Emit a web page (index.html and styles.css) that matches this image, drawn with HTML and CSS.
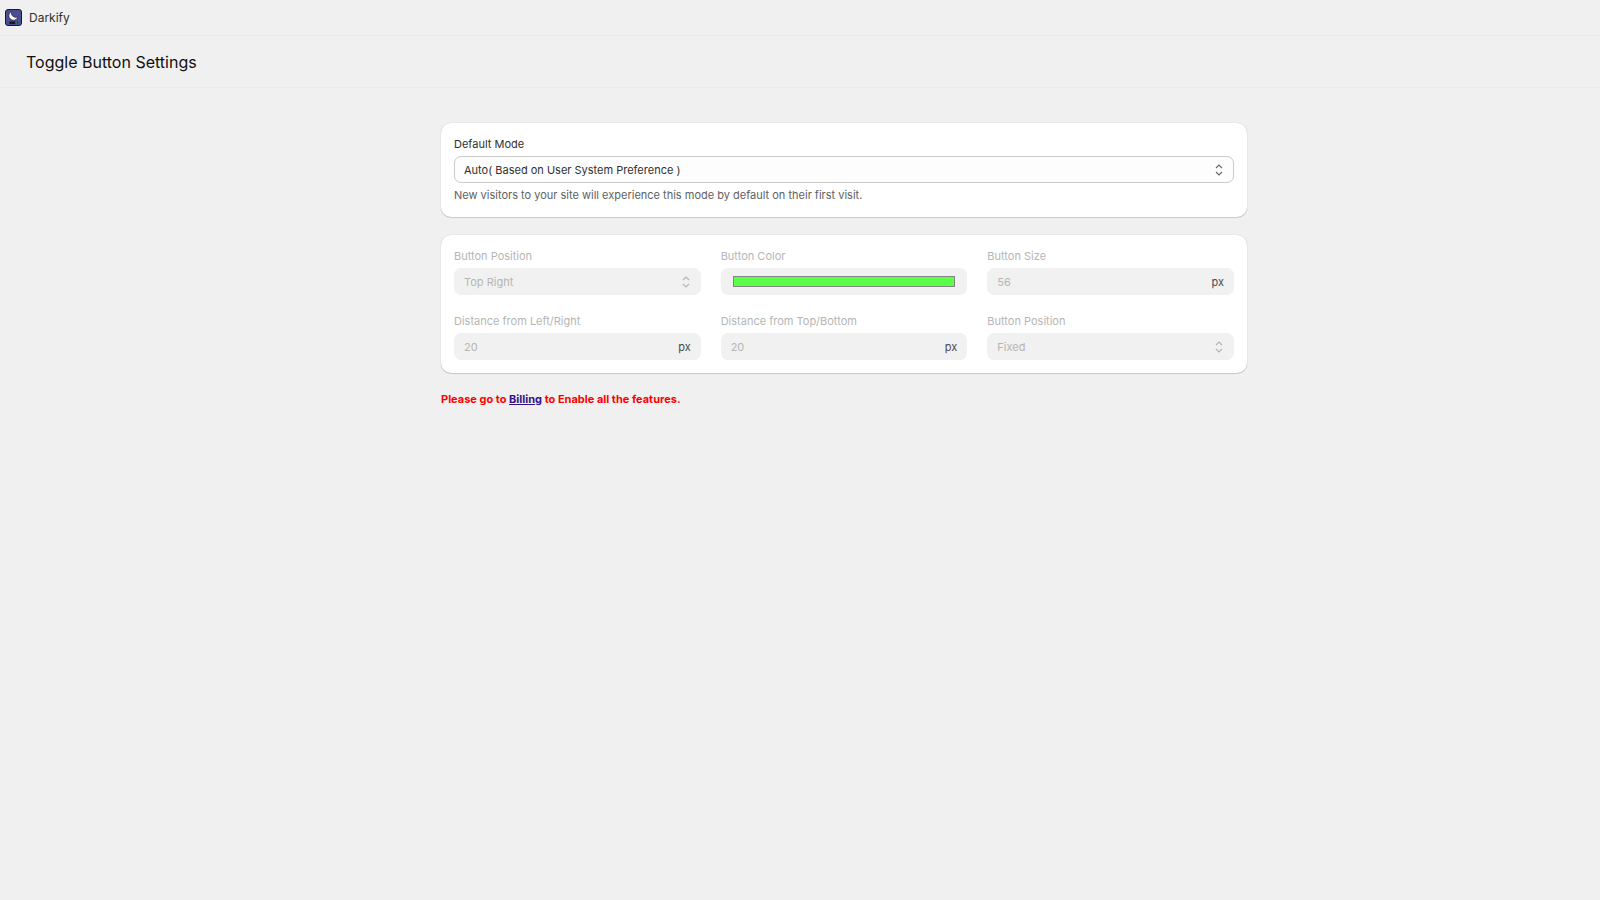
FILE: index.html
```html
<!DOCTYPE html>
<html lang="en">
<head>
    <meta charset="UTF-8">
    <meta name="viewport" content="width=device-width, initial-scale=1.0">
    <title>Darkify - Toggle Button Settings</title>
    <link rel="stylesheet" href="styles.css">
</head>
<body>

    <header class="app-bar">
        <svg class="app-logo" viewBox="0 0 17 17" aria-hidden="true">
            <rect x="0.5" y="0.5" width="16" height="16" rx="2.5" fill="#4b4f91" stroke="#15173a"/>
            <path d="M6.600 2.400A4.600 4.600 0 1 0 12.900 7.800A4.400 4.400 0 0 1 6.600 2.400z" fill="#fff" stroke="#1b1c2b" stroke-width="0.6"/>
            <rect x="4" y="12.500" width="9" height="2.600" rx="1.300" fill="#16181f"/>
            <circle cx="11.300" cy="13.800" r="1.200" fill="#2c8a2c"/>
        </svg>
        <span>Darkify</span>
    </header>

    <div class="title-bar">
        <h1>Toggle Button Settings</h1>
    </div>

    <main class="page">
        <div class="content">
            <section class="card">
                <div class="field">
                    <label for="defaultMode">Default Mode</label>
                    <div class="control">
                        <select id="defaultMode">
                            <option>Auto( Based on User System Preference )</option>
                            <option>Light</option>
                            <option>Dark</option>
                        </select>
                        <svg class="arrows" viewBox="0 0 8 12" aria-hidden="true"><path d="M1 4l3-3 3 3M1 8l3 3 3-3"/></svg>
                    </div>
                    <p class="help">New visitors to your site will experience this mode by default on their first visit.</p>
                </div>
            </section>

            <section class="card grid">
                <div class="field disabled">
                    <label for="buttonPosition">Button Position</label>
                    <div class="control">
                        <select id="buttonPosition" disabled>
                            <option>Top Right</option>
                        </select>
                        <svg class="arrows" viewBox="0 0 8 12" aria-hidden="true"><path d="M1 4l3-3 3 3M1 8l3 3 3-3"/></svg>
                    </div>
                </div>
                <div class="field disabled">
                    <label for="buttonColor">Button Color</label>
                    <div class="control">
                        <input type="color" id="buttonColor" value="#5cff47" disabled>
                    </div>
                </div>
                <div class="field disabled">
                    <label for="buttonSize">Button Size</label>
                    <div class="control">
                        <input type="text" id="buttonSize" value="56" disabled>
                        <span class="suffix">px</span>
                    </div>
                </div>
                <div class="field disabled">
                    <label for="distanceX">Distance from Left/Right</label>
                    <div class="control">
                        <input type="text" id="distanceX" value="20" disabled>
                        <span class="suffix">px</span>
                    </div>
                </div>
                <div class="field disabled">
                    <label for="distanceY">Distance from Top/Bottom</label>
                    <div class="control">
                        <input type="text" id="distanceY" value="20" disabled>
                        <span class="suffix">px</span>
                    </div>
                </div>
                <div class="field disabled">
                    <label for="positionType">Button Position</label>
                    <div class="control">
                        <select id="positionType" disabled>
                            <option>Fixed</option>
                        </select>
                        <svg class="arrows" viewBox="0 0 8 12" aria-hidden="true"><path d="M1 4l3-3 3 3M1 8l3 3 3-3"/></svg>
                    </div>
                </div>
            </section>

            <p class="notice">Please go to <a href="#billing">Billing</a> to Enable all the features.</p>
        </div>
    </main>

</body>
</html>
```
FILE: styles.css
```css
* {
    box-sizing: border-box;
}
body {
    margin: 0;
    font-family: Inter, "Liberation Sans", sans-serif;
    font-size: 11px;
    line-height: 16px;
    color: #303030;
    background-color: #f0f0f0;
}
.app-bar {
    display: flex;
    align-items: center;
    gap: 7px;
    height: 36px;
    padding-left: 5px;
    font-size: 12px;
    border-bottom: 1px solid #ebebeb;
}
.app-logo {
    width: 17px;
    height: 17px;
}
.title-bar {
    padding: 14px 26px 13px;
    border-bottom: 1px solid #ebebeb;
}
h1 {
    margin: 0;
    font-size: 16px;
    line-height: 24px;
    font-weight: 400;
    color: #111;
}
.page {
    padding: 35px 0 35px 88px;
}
.content {
    display: flex;
    flex-direction: column;
    gap: 18px;
    max-width: 806px;
    margin: 0 auto;
}
.card {
    padding: 13px;
    background: white;
    border-radius: 10px;
    box-shadow: 0 1px 1px rgba(0, 0, 0, 0.14), 0 0 1px rgba(0, 0, 0, 0.25);
}
.grid {
    display: grid;
    grid-template-columns: repeat(3, 1fr);
    gap: 18px 20px;
}
.field {
    display: flex;
    flex-direction: column;
    gap: 4px;
}
.control {
    position: relative;
}
select,
input {
    display: block;
    width: 100%;
    height: 27px;
    margin: 0;
    padding: 0 9px;
    font: inherit;
    color: #303030;
    background: #fdfdfd;
    border: 1px solid #cacaca;
    border-radius: 7px;
    appearance: none;
}
.arrows {
    position: absolute;
    top: 8px;
    right: 11px;
    width: 8px;
    height: 12px;
    fill: none;
    stroke: #6a6a6a;
    stroke-width: 1.2;
    pointer-events: none;
}
.help {
    margin: 0;
    line-height: 17px;
    color: #616161;
}
.disabled label {
    color: #b5b5b5;
}
.disabled select,
.disabled input {
    color: #b5b5b5;
    background: #f1f1f1;
    border-color: #f1f1f1;
    opacity: 1;
}
.disabled .arrows {
    stroke: #b5b5b5;
}
.suffix {
    position: absolute;
    top: 6px;
    right: 10px;
    color: #4a4a4a;
}
input[type="color"] {
    padding: 7px 11px;
}
input[type="color"]::-webkit-color-swatch-wrapper {
    padding: 0;
}
input[type="color"]::-webkit-color-swatch {
    border: 1px solid #858585;
    border-radius: 0;
}
.notice {
    margin: 0;
    font-weight: 700;
    color: #ff0000;
}
.notice a {
    color: #34108a;
}
```
